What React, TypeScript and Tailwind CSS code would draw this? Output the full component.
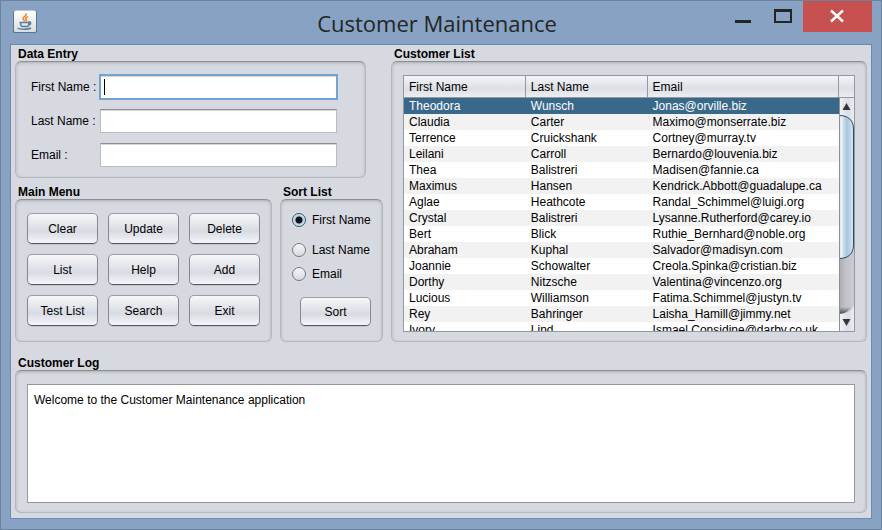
import { useState, type ReactNode } from "react";

const customers = [
  ["Theodora", "Wunsch", "Jonas@orville.biz"],
  ["Claudia", "Carter", "Maximo@monserrate.biz"],
  ["Terrence", "Cruickshank", "Cortney@murray.tv"],
  ["Leilani", "Carroll", "Bernardo@louvenia.biz"],
  ["Thea", "Balistreri", "Madisen@fannie.ca"],
  ["Maximus", "Hansen", "Kendrick.Abbott@guadalupe.ca"],
  ["Aglae", "Heathcote", "Randal_Schimmel@luigi.org"],
  ["Crystal", "Balistreri", "Lysanne.Rutherford@carey.io"],
  ["Bert", "Blick", "Ruthie_Bernhard@noble.org"],
  ["Abraham", "Kuphal", "Salvador@madisyn.com"],
  ["Joannie", "Schowalter", "Creola.Spinka@cristian.biz"],
  ["Dorthy", "Nitzsche", "Valentina@vincenzo.org"],
  ["Lucious", "Williamson", "Fatima.Schimmel@justyn.tv"],
  ["Rey", "Bahringer", "Laisha_Hamill@jimmy.net"],
  ["Ivory", "Lind", "Ismael.Considine@darby.co.uk"],
];

const columns = ["First Name", "Last Name", "Email"];
const actions = ["Clear", "Update", "Delete", "List", "Help", "Add", "Test List", "Search", "Exit"];

function Panel({ title, className = "", bodyClassName = "", children }: {
  title: string;
  className?: string;
  bodyClassName?: string;
  children: ReactNode;
}) {
  return (
    <section className={`flex flex-col ${className}`}>
      <h2 className="h-4 shrink-0 pl-[3px] text-xs leading-[18px] font-bold">{title}</h2>
      <div
        className={`min-h-0 flex-1 rounded-md border border-[#b4b7bc] border-t-[#8c8f94] shadow-[inset_0_1px_3px_#a9acb1] ${bodyClassName}`}
      >
        {children}
      </div>
    </section>
  );
}

function NimbusButton({ children, className = "" }: { children: ReactNode; className?: string }) {
  return (
    <button
      type="button"
      className={`rounded-[5px] border border-[#85888f] border-t-[#9a9da5] border-b-[#55585e] bg-linear-to-b from-[#f6f7f9] via-[#d8dbe2] via-60% to-[#f4f6fb] shadow-[0_1px_0_#c3c6cc] ${className}`}
    >
      {children}
    </button>
  );
}

function Field({ id, label, active = false }: { id: string; label: string; active?: boolean }) {
  return (
    <div className="flex h-6 items-center">
      <label htmlFor={id} className="w-[69px] shrink-0 whitespace-nowrap">
        {label}
      </label>
      <div
        className={`relative flex h-6 min-w-0 flex-1 border border-[#b9bcc2] border-t-[#8d8f94] bg-white shadow-[inset_0_1px_0_#d5d6d8] ${
          active ? "outline-2 -outline-offset-1 outline-[#73a4d1]" : ""
        }`}
      >
        <input id={id} type="text" className="w-full min-w-0 bg-transparent px-1 outline-none" />
        {active && <span className="absolute top-[3px] left-[3px] h-4 w-px bg-black" />}
      </div>
    </div>
  );
}

function JavaIcon() {
  return (
    <svg viewBox="0 0 24 24" className="size-6" aria-hidden="true">
      <defs>
        <linearGradient id="tile" x1="0" y1="0" x2="0" y2="1">
          <stop offset="0" stopColor="#ffffff" />
          <stop offset="1" stopColor="#dcdcdc" />
        </linearGradient>
      </defs>
      <rect x="0" y="0.5" width="24" height="22.5" rx="2" fill="#5a7590" />
      <rect x="1" y="0.5" width="22" height="21.5" rx="1.5" fill="url(#tile)" />
      <path d="M13 3.500c1.500 2-3 3-3 5 0 1.200 1.200 1.600 1.700 2.800M14.800 6.500c-2.300 1-2.500 2-1.600 3 .6.800 0 1.400-.5 1.900" fill="none" stroke="#ee8a30" strokeWidth="1.600" />
      <path d="M6.500 12.500h9.500M7.500 12.500c0 3 .8 4 2 4h4.500c1.500 0 2-1.500 2-4M15.500 12c3-1 3 3-.7 3.200M4.500 18c2 1.500 11 1.500 13.500 0" fill="none" stroke="#55809f" strokeWidth="1.500" />
    </svg>
  );
}

function ScrollBar() {
  return (
    <svg viewBox="0 0 15 233" className="h-[233px] w-[15px] shrink-0" aria-hidden="true">
      <defs>
        <linearGradient id="track" x1="0" x2="1" y1="0" y2="0">
          <stop offset="0" stopColor="#a9abb0" />
          <stop offset="0.4" stopColor="#bfc1c6" />
          <stop offset="1" stopColor="#cbcdd2" />
        </linearGradient>
        <linearGradient id="thumb" x1="0" x2="1" y1="0" y2="0">
          <stop offset="0" stopColor="#c3d3e2" />
          <stop offset="0.15" stopColor="#eef5fa" />
          <stop offset="0.35" stopColor="#c5d9e9" />
          <stop offset="0.55" stopColor="#a9c4dc" />
          <stop offset="1" stopColor="#d3e9f6" />
        </linearGradient>
        <linearGradient id="arrowTile" x1="0" x2="1" y1="0" y2="0">
          <stop offset="0" stopColor="#f4f5f7" />
          <stop offset="0.6" stopColor="#d9dce2" />
          <stop offset="1" stopColor="#eceef2" />
        </linearGradient>
        <linearGradient id="lip" x1="0" x2="0" y1="0" y2="1">
          <stop offset="0" stopColor="#55585d" stopOpacity="0" />
          <stop offset="1" stopColor="#3f4247" />
        </linearGradient>
      </defs>
      <rect width="15" height="233" fill="url(#track)" />
      <path d="M0 0H15V28Q12 17 0 17Z" fill="url(#arrowTile)" />
      <path d="M0 209H12Q8 216 0 216Z" fill="url(#lip)" />
      <path d="M0 233H15V208Q11 216 0 216Z" fill="url(#arrowTile)" />
      <path d="M0 17.500C9 17.500 14.500 22 14.500 31V147C14.500 156 9 160.500 0 160.500Z" fill="url(#thumb)" stroke="#2f4b62" />
      <path d="M3.500 12L7.500 5L11.500 12Z" fill="#33363b" />
      <path d="M3.500 221L7.500 228L11.500 221Z" fill="#33363b" />
      <path d="M0.500 0V233" stroke="#8b8f97" />
    </svg>
  );
}

function CustomerTable() {
  const [selected, setSelected] = useState(0);
  return (
    <div className="flex h-[257px] overflow-hidden border border-[#9297a1] bg-white">
      <div className="min-w-0 flex-1 overflow-hidden">
        <table className="w-full table-fixed border-separate border-spacing-0">
          <colgroup>
            <col className="w-[28%]" />
            <col className="w-[28%]" />
            <col />
          </colgroup>
          <thead>
            <tr>
              {columns.map((name) => (
                <th
                  key={name}
                  className="h-[22px] border-r border-b border-[#9297a1] bg-linear-to-b from-[#f4f5f8] via-[#dcdfe4] via-60% to-[#eceef2] p-0 pl-[5px] text-left font-normal"
                >
                  {name}
                </th>
              ))}
            </tr>
          </thead>
          <tbody>
            {customers.map((row, index) => (
              <tr
                key={row[2]}
                onClick={() => setSelected(index)}
                className={index === selected ? "bg-[#39698a] text-white" : "odd:bg-white even:bg-[#f2f2f2]"}
              >
                {row.map((value) => (
                  <td key={value} className="h-4 p-0 pl-[5px] leading-4 whitespace-nowrap">
                    {value}
                  </td>
                ))}
              </tr>
            ))}
          </tbody>
        </table>
      </div>
      <div className="flex w-[15px] flex-col">
        <div className="h-[22px] shrink-0 border-b border-[#9297a1] bg-linear-to-b from-[#f4f5f8] via-[#dcdfe4] via-60% to-[#eceef2]" />
        <ScrollBar />
      </div>
    </div>
  );
}

export default function App() {
  const [sortBy, setSortBy] = useState("First Name");

  return (
    <main className="flex min-h-screen flex-col border border-[#6b839f] bg-[#87a2c2] px-[9px] pb-[10px] font-['Liberation_Sans',Arial,sans-serif] text-xs leading-4 text-black">
      <header className="flex h-[43px] shrink-0 items-start">
        <div className="flex w-[137px] pt-[9px] pl-[3px]">
          <JavaIcon />
        </div>
        <h1 className="flex-1 pt-[6px] text-center font-['Open_Sans','Noto_Sans',sans-serif] text-[22px] leading-8 text-[#252525]">
          Customer Maintenance
        </h1>
        <div className="flex">
          <button type="button" aria-label="Minimize" className="h-[31px] w-[38px]">
            <svg viewBox="0 0 38 31" className="h-[31px] w-[38px]">
              <path d="M8 19h16v3H8z" fill="#252525" />
            </svg>
          </button>
          <button type="button" aria-label="Maximize" className="h-[31px] w-[38px]">
            <svg viewBox="0 0 38 31" className="h-[31px] w-[38px]">
              <path d="M9 8h18v14H9zM11 11v9h14v-9z" fill="#252525" fillRule="evenodd" />
            </svg>
          </button>
          <button type="button" aria-label="Close" className="h-[31px] w-[69px] bg-[#c75050]">
            <svg viewBox="0 0 69 31" className="h-[31px] w-[69px]">
              <path d="M28 9.500l12 11M40 9.500l-12 11" stroke="white" strokeWidth="2.400" />
            </svg>
          </button>
        </div>
      </header>

      <div className="flex flex-1 flex-col gap-3 border border-[#6b8bb0] bg-[#d6d9df] px-1 pb-[5px]">
        <div className="flex gap-2">
          <div className="flex w-[368px] shrink-0 flex-col gap-[5px]">
            <Panel
              title="Data Entry"
              className="mr-[17px]"
              bodyClassName="flex flex-col gap-[10px] pt-[13px] pr-7 pb-[10px] pl-[15px]"
            >
              <Field id="first" label="First Name :" active />
              <Field id="last" label="Last Name :" />
              <Field id="email" label="Email :" />
            </Panel>
            <div className="flex gap-2">
              <Panel
                title="Main Menu"
                className="flex-1"
                bodyClassName="grid grid-cols-3 content-start gap-[10px] px-[11px] pt-[13px] pb-[15px]"
              >
                {actions.map((name) => (
                  <NimbusButton key={name} className="h-[31px]">
                    {name}
                  </NimbusButton>
                ))}
              </Panel>
              <Panel title="Sort List" className="w-[103px]" bodyClassName="flex flex-col pt-3 pl-[11px]">
                <fieldset className="flex flex-col gap-2">
                  {columns.map((field) => (
                    <label key={field} className="flex h-4 items-center gap-[6px] whitespace-nowrap first:mb-[6px]">
                      <input
                        type="radio"
                        name="sort"
                        checked={sortBy === field}
                        onChange={() => setSortBy(field)}
                        className="size-[14px] shrink-0 appearance-none rounded-full border border-[#74777c] bg-linear-to-b from-[#f5f6f8] to-[#d8dbe1] checked:border-[#34536e] checked:bg-[radial-gradient(circle,#101418_3px,#b5cbdd_4px,#dcebf5_6px)]"
                      />
                      {field}
                    </label>
                  ))}
                </fieldset>
                <NimbusButton className="mt-[15px] ml-2 h-[29px] w-[71px]">Sort</NimbusButton>
              </Panel>
            </div>
          </div>
          <Panel title="Customer List" className="min-w-0 flex-1" bodyClassName="px-[11px] pt-[13px] pb-[9px]">
            <CustomerTable />
          </Panel>
        </div>
        <Panel title="Customer Log" className="flex-1" bodyClassName="flex px-[11px] pt-[13px] pb-[9px]">
          <textarea
            aria-label="Customer Log"
            readOnly
            defaultValue="Welcome to the Customer Maintenance application"
            className="w-full flex-1 resize-none border border-[#9297a1] bg-white px-[6px] pt-[7px] outline-none"
          />
        </Panel>
      </div>
    </main>
  );
}
